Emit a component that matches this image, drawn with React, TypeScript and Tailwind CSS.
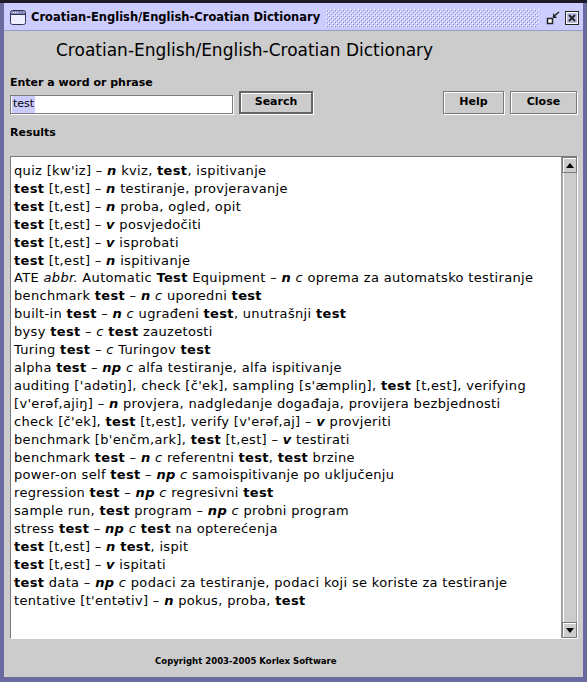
import React from "react";

const entries = [
  "quiz [kw'iz] – _n_ kviz, *test*, ispitivanje",
  "*test* [t,est] – _n_ testiranje, provjeravanje",
  "*test* [t,est] – _n_ proba, ogled, opit",
  "*test* [t,est] – _v_ posvjedočiti",
  "*test* [t,est] – _v_ isprobati",
  "*test* [t,est] – _n_ ispitivanje",
  "ATE ~abbr.~ Automatic *Test* Equipment – _n_ ~c~ oprema za automatsko testiranje",
  "benchmark *test* – _n_ ~c~ uporedni *test*",
  "built-in *test* – _n_ ~c~ ugrađeni *test*, unutrašnji *test*",
  "bysy *test* – ~c~ *test* zauzetosti",
  "Turing *test* – ~c~ Turingov *test*",
  "alpha *test* – _np_ ~c~ alfa testiranje, alfa ispitivanje",
  "auditing ['adətiŋ], check [č'ek], sampling [s'æmpliŋ], *test* [t,est], verifying",
  "[v'erəf,ajiŋ] – _n_ provjera, nadgledanje događaja, provijera bezbjednosti",
  "check [č'ek], *test* [t,est], verify [v'erəf,aj] – _v_ provjeriti",
  "benchmark [b'enčm,ark], *test* [t,est] – _v_ testirati",
  "benchmark *test* – _n_ ~c~ referentni *test*, *test* brzine",
  "power-on self *test* – _np_ ~c~ samoispitivanje po uključenju",
  "regression *test* – _np_ ~c~ regresivni *test*",
  "sample run, *test* program – _np_ ~c~ probni program",
  "stress *test* – _np_ ~c~ *test* na opterećenja",
  "*test* [t,est] – _n_ *test*, ispit",
  "*test* [t,est] – _v_ ispitati",
  "*test* data – _np_ ~c~ podaci za testiranje, podaci koji se koriste za testiranje",
  "tentative [t'entətiv] – _n_ pokus, proba, *test*",
];

// *bold*, _bold italic_, ~italic~
function renderLine(line: string) {
  const parts = line.split(/(\*[^*]+\*|_[^_]+_|~[^~]+~)/);
  return parts.map((p, i) => {
    if (p.startsWith("*")) return <b key={i}>{p.slice(1, -1)}</b>;
    if (p.startsWith("_")) return <i key={i} className="font-bold">{p.slice(1, -1)}</i>;
    if (p.startsWith("~")) return <i key={i}>{p.slice(1, -1)}</i>;
    return <span key={i}>{p}</span>;
  });
}

function FrameIcon() {
  return (
    <svg width="16" height="15" viewBox="0 0 16 15">
      <rect x="0.5" y="0.5" width="15" height="14" rx="2" fill="#eeeeff" stroke="#333355" />
      <rect x="1" y="1" width="14" height="3" fill="#8888bb" />
      <rect x="3" y="2" width="1" height="1" fill="#fff" />
      <rect x="5" y="2" width="1" height="1" fill="#fff" />
      <rect x="7" y="2" width="1" height="1" fill="#fff" />
      <line x1="1" y1="4.5" x2="15" y2="4.5" stroke="#333355" />
    </svg>
  );
}

function Bumps() {
  return (
    <svg className="flex-1 h-[18px] mx-[6px]">
      <defs>
        <pattern id="bumps" width="4" height="4" patternUnits="userSpaceOnUse">
          <rect x="0" y="0" width="1" height="1" fill="#ffffff" />
          <rect x="1" y="1" width="1" height="1" fill="#8a8ab8" />
          <rect x="2" y="2" width="1" height="1" fill="#ffffff" />
          <rect x="3" y="3" width="1" height="1" fill="#8a8ab8" />
        </pattern>
      </defs>
      <rect width="100%" height="100%" fill="url(#bumps)" />
    </svg>
  );
}

function IconifyButton() {
  return (
    <svg width="17" height="14" viewBox="0 0 17 14">
      <rect x="2.5" y="7.5" width="5" height="5" fill="#fff" stroke="#222" strokeWidth="1.5" />
      <line x1="8" y1="6" x2="14" y2="1" stroke="#222" strokeWidth="1.5" />
      <path d="M8 2 L8 7 L12 7 Z" fill="#222" />
    </svg>
  );
}

function CloseButton() {
  return (
    <svg width="14" height="14" viewBox="0 0 14 14">
      <rect x="0.5" y="0.5" width="13" height="13" fill="#e6e6ff" stroke="#222" />
      <rect x="1.5" y="1.5" width="11" height="11" fill="#b8b8dc" stroke="#fff" />
      <path d="M4 4 L10 10 M10 4 L4 10" stroke="#222" strokeWidth="1.8" />
    </svg>
  );
}

function MetalButton({ label, width, isDefault }: { label: string; width: string; isDefault?: boolean }) {
  return (
    <button
      className={`${width} h-[23px] bg-[#cccccc] text-[11px] font-bold text-black flex items-center justify-center ${
        isDefault
          ? "border-2 border-[#666666] shadow-[inset_1px_1px_0_#ffffff,1px_1px_0_#ffffff]"
          : "border border-[#7a7a7a] shadow-[inset_1px_1px_0_#ffffff,1px_1px_0_#ffffff]"
      }`}
    >
      {label}
    </button>
  );
}

export default function App() {
  return (
    <div className="w-[587px] h-[682px] flex flex-col bg-[#6a6aa0] border-t-[3px] border-t-[#1a1a28] px-[4px] pb-[5px] font-['DejaVu_Sans',sans-serif] text-black">
      {/* title bar */}
      <div className="h-[28px] shrink-0 bg-[#ccccff] border-b border-[#9999cc] flex items-center pt-[2px] pl-[6px] pr-[4px]">
        <FrameIcon />
        <span className="ml-[5px] text-[11.5px] font-bold whitespace-nowrap">
          Croatian-English/English-Croatian Dictionary
        </span>
        <Bumps />
        <div className="flex items-center gap-[3px]">
          <IconifyButton />
          <CloseButton />
        </div>
      </div>

      {/* body */}
      <div className="flex-1 bg-[#cccccc] flex flex-col px-[6px]">
        <h1 className="mt-[9px] pl-[46px] text-[17px] leading-[20px] whitespace-nowrap">
          Croatian-English/English-Croatian Dictionary
        </h1>
        <div className="mt-[15px] text-[11px] font-bold leading-[16px]">Enter a word or phrase</div>
        <div className="h-[23px] flex items-end">
          <div className="w-[223px] h-[19px] bg-white border border-[#7a7a7a] shadow-[1px_1px_0_#ffffff] flex items-center pl-[1px] text-[11px]">
            <span className="bg-[#ccccff] px-[1px]">test</span>
          </div>
          <div className="ml-[6px] self-stretch">
            <MetalButton label="Search" width="w-[74px]" isDefault />
          </div>
          <div className="flex-1" />
          <div className="self-stretch flex gap-[6px]">
            <MetalButton label="Help" width="w-[61px]" />
            <MetalButton label="Close" width="w-[67px]" />
          </div>
        </div>
        <div className="mt-[11px] text-[11px] font-bold leading-[16px]">Results</div>

        {/* results */}
        <div className="mt-[15px] h-[482px] flex bg-white border-t border-l border-[#7a7a7a] shadow-[1px_1px_0_#ffffff]">
          <div className="flex-1 pl-[3px] pt-[5px] text-[13px] tracking-[0.33px] leading-[17.9px] whitespace-pre overflow-hidden">
            {entries.map((e, i) => (
              <div key={i}>{renderLine(e)}</div>
            ))}
          </div>
          <div className="w-[16px] flex flex-col bg-[#cccccc] border-l border-[#999999]">
            <div className="h-[16px] flex items-center justify-center border border-[#7a7a7a] shadow-[inset_1px_1px_0_#ffffff]">
              <svg width="8" height="5" viewBox="0 0 8 5">
                <path d="M0 5 L4 0 L8 5 Z" fill="#000" />
              </svg>
            </div>
            <div className="flex-1 border-x border-[#aaaaaa] shadow-[inset_1px_0_0_#ffffff]" />
            <div className="h-[16px] flex items-center justify-center border border-[#7a7a7a] shadow-[inset_1px_1px_0_#ffffff]">
              <svg width="8" height="5" viewBox="0 0 8 5">
                <path d="M0 0 L4 5 L8 0 Z" fill="#000" />
              </svg>
            </div>
          </div>
        </div>

        <div className="mt-[16px] pl-[145px] text-[9.5px] font-bold font-['DejaVu_Sans_Condensed',sans-serif] leading-[14px] whitespace-nowrap">
          Copyright 2003-2005 Korlex Software
        </div>
      </div>
    </div>
  );
}
